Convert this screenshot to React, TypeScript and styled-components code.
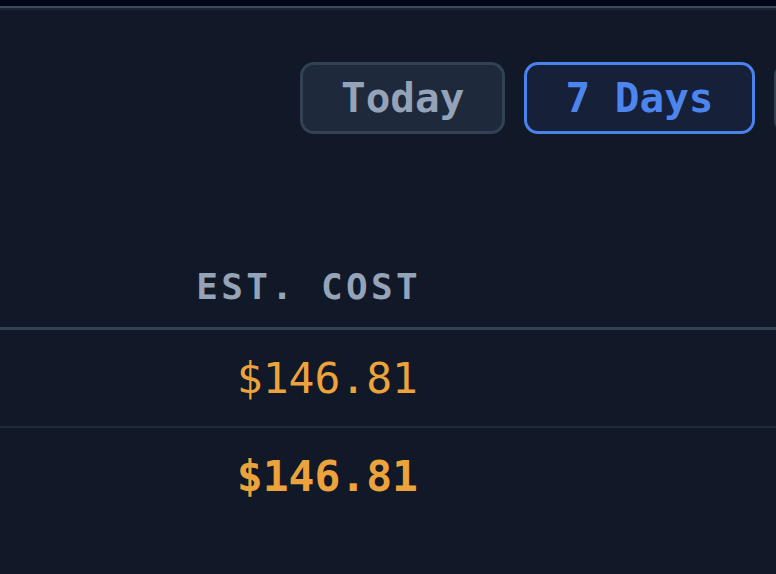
import { FC } from "react";
import styled, { createGlobalStyle } from "styled-components";

const GlobalStyle = createGlobalStyle`
  html, body {
    margin: 0;
    padding: 0;
    background-color: #111827;
  }
  body {
    font-family: "DejaVu Sans Mono", "Liberation Mono", monospace;
    overflow: hidden;
  }
`;

const Page = styled.div`
  width: 776px;
  height: 574px;
  background-color: #111827;
  overflow: hidden;
  display: flex;
  flex-direction: column;
`;

const TopBar = styled.div`
  height: 6px;
  background-color: #020617;
  border-bottom: 2px solid #3d495c;
  box-shadow: 0 2px 0 #1c2434;
  flex-shrink: 0;
`;

const Toolbar = styled.div`
  display: flex;
  gap: 19px;
  padding: 54px 0 0 300px;
  white-space: nowrap;
`;

const RangeButton = styled.button<{ $active?: boolean }>`
  box-sizing: border-box;
  flex-shrink: 0;
  height: 72px;
  padding: 0 38px;
  border-radius: 14px;
  border: 3px solid ${(p) => (p.$active ? "#4a83ec" : "#334155")};
  background-color: ${(p) => (p.$active ? "#172039" : "#1e293b")};
  color: ${(p) => (p.$active ? "#4d85ee" : "#94a3b8")};
  font-family: "DejaVu Sans Mono", monospace;
  font-weight: 700;
  font-size: 41px;
  line-height: 1;
  cursor: pointer;
`;

const Table = styled.div`
  margin-top: 112px;
  display: flex;
  flex-direction: column;
`;

const HeaderRow = styled.div`
  display: grid;
  grid-template-columns: 420px 1fr;
  height: 81px;
  align-items: center;
  border-bottom: 3px solid #334155;
`;

const HeaderCell = styled.div`
  text-align: right;
  font-size: 36px;
  font-weight: 700;
  letter-spacing: 3.3px;
  margin-right: -1px;
  color: #94a3b8;
`;

const Row = styled.div<{ $total?: boolean }>`
  display: grid;
  grid-template-columns: 420px 1fr;
  height: 96px;
  align-items: center;
  border-bottom: ${(p) => (p.$total ? "none" : "2px solid #1e293b")};
`;

const CostCell = styled.div<{ $bold?: boolean }>`
  text-align: right;
  padding-right: 2px;
  font-size: 43px;
  font-weight: ${(p) => (p.$bold ? 700 : 400)};
  color: #eda33c;
`;

const App: FC = () => {
  return (
    <Page>
      <GlobalStyle />
      <TopBar />
      <Toolbar>
        <RangeButton>Today</RangeButton>
        <RangeButton $active>7 Days</RangeButton>
        <RangeButton>30 Days</RangeButton>
      </Toolbar>
      <Table>
        <HeaderRow>
          <HeaderCell>EST. COST</HeaderCell>
          <div />
        </HeaderRow>
        <Row>
          <CostCell>$146.81</CostCell>
          <div />
        </Row>
        <Row $total>
          <CostCell $bold>$146.81</CostCell>
          <div />
        </Row>
      </Table>
    </Page>
  );
};

export default App;
